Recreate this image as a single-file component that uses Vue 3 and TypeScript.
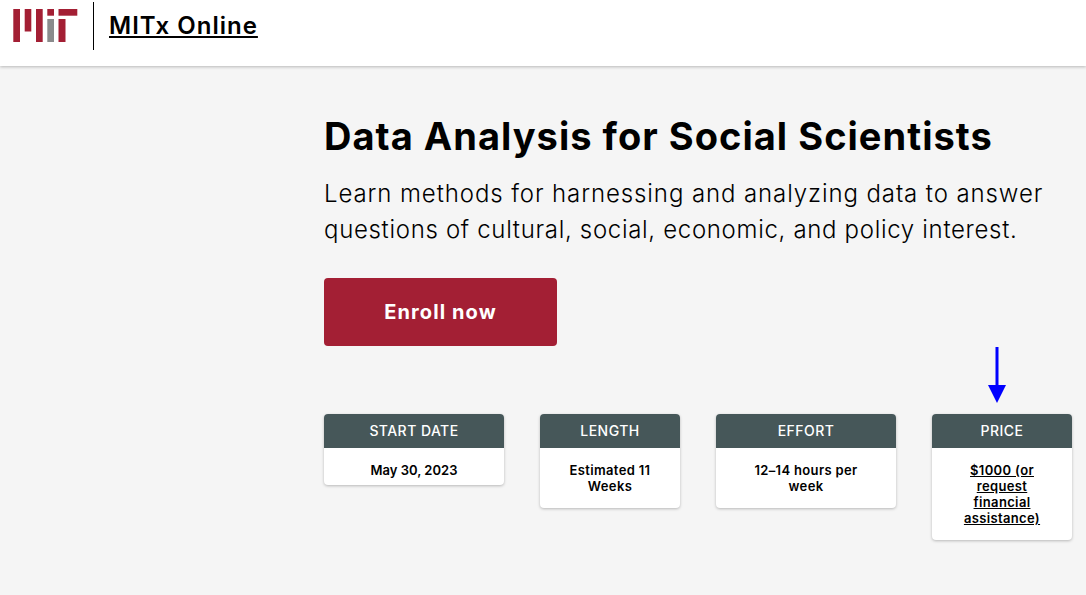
<script setup lang="ts">
interface Fact { label: string; text: string; kind: string; link?: boolean }
const facts: Fact[] = [
  { label: 'START DATE', text: 'May 30, 2023', kind: 'wide short' },
  { label: 'LENGTH', text: 'Estimated 11 Weeks', kind: '' },
  { label: 'EFFORT', text: '12–14 hours per week', kind: 'wide' },
  { label: 'PRICE', text: '$1000 (or request financial assistance)', kind: '', link: true },
]
</script>

<template>
  <div class="page">
    <header class="topbar">
      <svg class="logo" width="65" height="33" viewBox="0 0 65 33" aria-label="MIT">
        <g fill="#a31f34">
          <rect x="0.3" y="0" width="6.7" height="33" />
          <rect x="11.7" y="0" width="6.6" height="22.5" />
          <rect x="23" y="0" width="6.7" height="33" />
          <rect x="34.3" y="0" width="6.7" height="6.7" />
          <rect x="45.5" y="0" width="18.8" height="6.7" />
          <rect x="45.5" y="10" width="7" height="23" />
        </g>
        <rect x="34.3" y="10" width="6.7" height="23" fill="#8a8b8c" />
      </svg>
      <span class="divider"></span>
      <a class="brand" href="#">MITx Online</a>
    </header>
    <main class="main">
      <h1 class="title">Data Analysis for Social Scientists</h1>
      <p class="lead">
        <span class="line-one">Learn methods for harnessing and analyzing data to answer</span>
        <span class="line-two">questions of cultural, social, economic, and policy interest.</span>
      </p>
      <button class="enroll">Enroll now</button>
      <section class="facts">
        <article v-for="f in facts" :key="f.label" class="card" :class="f.kind">
          <div class="card-head">{{ f.label }}</div>
          <div class="card-body">
            <a v-if="f.link" href="#">{{ f.text }}</a>
            <template v-else>{{ f.text }}</template>
          </div>
        </article>
      </section>
      <svg class="arrow" width="18" height="57" viewBox="0 0 18 57">
        <rect x="7.5" y="0" width="3" height="40" fill="#0000ff" />
        <polygon points="0,38 18,38 9,56" fill="#0000ff" />
      </svg>
    </main>
  </div>
</template>

<style scoped>
.page {
  width: 1086px;
  height: 595px;
  overflow: hidden;
  background: #f5f5f5;
  font-family: Inter, "Liberation Sans", sans-serif;
  color: #000;
}
.topbar {
  height: 66px;
  background: #fff;
  box-shadow: 0 1px 3px rgba(0, 0, 0, 0.25);
  display: flex;
  align-items: flex-start;
  position: relative;
}
.logo {
  margin: 9px 0 0 13px;
}
.divider {
  width: 1px;
  height: 48px;
  margin: 2px 0 0 15px;
  background: #000;
}
.brand {
  margin: 10px 0 0 15px;
  font-size: 24px;
  line-height: 32px;
  font-weight: 600;
  letter-spacing: 1px;
  color: #000;
  text-decoration: underline;
}
.main {
  position: relative;
  padding: 46px 0 0 324px;
}
.title {
  margin: 0;
  font-size: 38px;
  line-height: 48px;
  font-weight: 700;
  letter-spacing: 1.03px;
  white-space: nowrap;
}
.lead {
  margin: 16px 0 0;
  font-size: 24px;
  line-height: 36px;
  font-weight: 300;
  white-space: nowrap;
}
.line-one,
.line-two {
  display: block;
}
.line-one {
  letter-spacing: 0.9px;
}
.line-two {
  letter-spacing: 0.68px;
}
.enroll {
  display: block;
  margin-top: 30px;
  width: 233px;
  height: 68px;
  border: 0;
  border-radius: 4px;
  background: #a31f34;
  color: #fff;
  font-family: inherit;
  font-size: 20px;
  font-weight: 700;
  letter-spacing: 1.1px;
}
.facts {
  display: flex;
  align-items: flex-start;
  gap: 36px;
  margin-top: 68px;
}
.card {
  width: 140px;
  background: #fff;
  border-radius: 4px;
  box-shadow: 0 1px 3px rgba(0, 0, 0, 0.25);
  overflow: hidden;
}
.card.wide {
  width: 180px;
}
.card-head {
  height: 34px;
  background: #465759;
  color: #fff;
  font-size: 14px;
  line-height: 34px;
  font-weight: 500;
  letter-spacing: 0.45px;
  text-align: center;
}
.card-body {
  padding: 14px 20px;
  font-size: 13px;
  line-height: 16px;
  font-weight: 600;
  letter-spacing: 0.35px;
  text-align: center;
}
.wide .card-body {
  padding-left: 32px;
  padding-right: 32px;
}
.short .card-body {
  padding-bottom: 7px;
  letter-spacing: 0;
}
.card-body a {
  color: #000;
  text-decoration: underline;
}
.arrow {
  position: absolute;
  left: 987.5px;
  top: 281px;
}
</style>

<style>
body {
  margin: 0;
}
</style>
